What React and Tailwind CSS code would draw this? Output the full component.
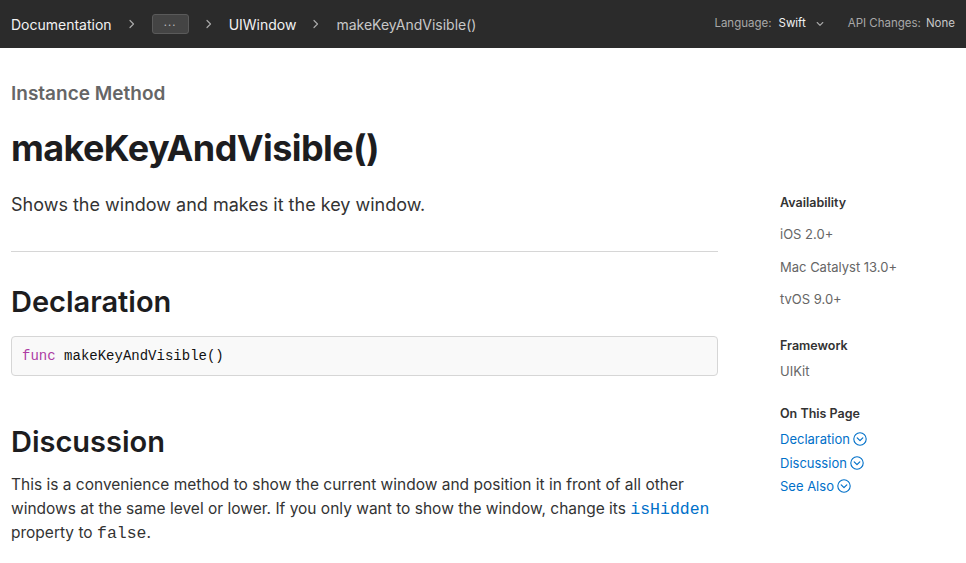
import React from 'react';

const Chevron = () => (
  <svg width="6" height="10" viewBox="0 0 6 10" className="shrink-0">
    <polyline points="1,1.5 4.5,5 1,8.5" fill="none" stroke="#a8a8a8" strokeWidth="1.2" strokeLinecap="round" strokeLinejoin="round" />
  </svg>
);

const CircleChevron = () => (
  <svg width="14" height="14" viewBox="0 0 14 14" className="shrink-0">
    <circle cx="7" cy="7" r="6.2" fill="none" stroke="#0070c9" strokeWidth="1.1" />
    <polyline points="4.2,5.8 7,8.6 9.8,5.8" fill="none" stroke="#0070c9" strokeWidth="1.2" strokeLinecap="round" strokeLinejoin="round" />
  </svg>
);

const NavBar = () => (
  <div className="h-12 bg-[#2b2b2b] flex items-center justify-between px-[11px] font-['Inter',sans-serif]">
    <div className="flex items-center gap-[17px] text-[14px]">
      <span className="text-[#f2f2f2]">Documentation</span>
      <Chevron />
      <span className="w-[37px] h-5 rounded-[3px] bg-[#444] border border-[#5a5a5a] flex items-center justify-center text-[#bbb] text-[11px] leading-none pb-[4px] tracking-[1px]">
        ...
      </span>
      <Chevron />
      <span className="text-[#f2f2f2]">UIWindow</span>
      <Chevron />
      <span className="text-[#c8c8c8]">makeKeyAndVisible()</span>
    </div>
    <div className="flex items-center text-[11.5px]">
      <span className="text-[#a8a8a8]">Language:</span>
      <span className="text-[#f2f2f2] ml-[7px]">Swift</span>
      <svg width="8" height="6" viewBox="0 0 8 6" className="ml-[10px]">
        <polyline points="1.2,1.5 4,4.3 6.8,1.5" fill="none" stroke="#a8a8a8" strokeWidth="1.1" strokeLinecap="round" strokeLinejoin="round" />
      </svg>
      <span className="text-[#a8a8a8] ml-[24px]">API Changes:</span>
      <span className="text-[#c8c8c8] ml-[5px]">None</span>
    </div>
  </div>
);

const Sidebar = () => (
  <div className="ml-[62px] mt-[112px] flex-1 text-[13px] leading-5">
    <div className="text-[12.5px] leading-[18px] font-semibold text-[#333]">Availability</div>
    <div className="mt-3 flex flex-col gap-[12.5px] text-[#666]">
      <span>iOS 2.0+</span>
      <span>Mac Catalyst 13.0+</span>
      <span>tvOS 9.0+</span>
    </div>
    <div className="mt-[28px] text-[12.5px] leading-[18px] font-semibold text-[#333]">Framework</div>
    <div className="mt-[6px] text-[#666]">UIKit</div>
    <div className="mt-6 text-[12.5px] leading-[18px] font-semibold text-[#333]">On This Page</div>
    <div className="mt-[6px] flex flex-col gap-[3.5px] text-[#0070c9]">
      {['Declaration', 'Discussion', 'See Also'].map((label) => (
        <span key={label} className="flex items-center gap-[3px]">
          {label}
          <CircleChevron />
        </span>
      ))}
    </div>
  </div>
);

export default function App() {
  return (
    <div className="w-[966px] h-[563px] overflow-hidden bg-white font-['Inter',sans-serif]">
      <NavBar />
      <div className="flex px-[11px] pt-[34px]">
        <div className="w-[707px] shrink-0">
          <div className="text-[19px] leading-6 font-semibold text-[#666]">Instance Method</div>
          <h1 className="mt-5 text-[36px] leading-[44px] font-bold text-[#1d1d1f] tracking-[-0.6px]">
            makeKeyAndVisible()
          </h1>
          <p className="mt-[21px] text-[18px] leading-7 text-[#333]">
            Shows the window and makes it the key window.
          </p>
          <hr className="mt-8 border-t border-[#d6d6d6]" />
          <h2 className="mt-8 text-[29px] leading-9 font-semibold text-[#1d1d1f]">Declaration</h2>
          <div className="mt-4 h-10 bg-[#f9f9f9] border border-[#d6d6d6] rounded-[4px] flex items-center px-[10px] font-['Liberation_Mono',monospace] text-[14px] text-[#111]">
            <span className="text-[#ad3da4]">func</span>
            <span className="ml-[8.5px]">makeKeyAndVisible()</span>
          </div>
          <h2 className="mt-12 text-[29px] leading-9 font-semibold text-[#1d1d1f]">Discussion</h2>
          <p className="mt-[13px] text-[15.5px] leading-6 text-[#333]">
            This is a convenience method to show the current window and position it in front of all other
            windows at the same level or lower. If you only want to show the window, change its{' '}
            <span className="font-['Liberation_Mono',monospace] text-[16.5px] leading-none text-[#0070c9]">isHidden</span>{' '}
            property to{' '}
            <span className="font-['Liberation_Mono',monospace] text-[16.5px] leading-none text-[#333]">false</span>.
          </p>
        </div>
        <Sidebar />
      </div>
    </div>
  );
}
